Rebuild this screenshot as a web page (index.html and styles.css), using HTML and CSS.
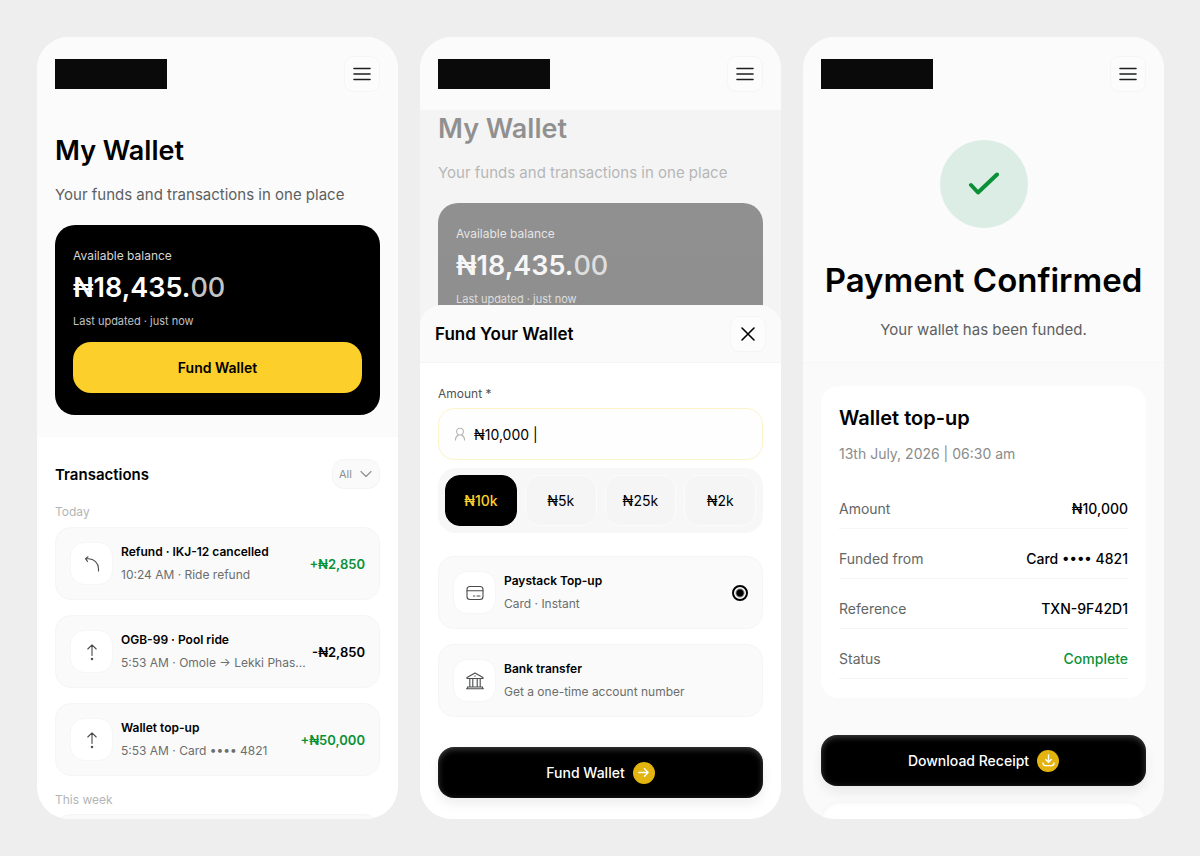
FILE: index.html
```html
<!DOCTYPE html>
<html lang="en">
<head>
  <meta charset="UTF-8">
  <meta name="viewport" content="width=device-width, initial-scale=1.0">
  <title>My Wallet</title>
  <link rel="stylesheet" href="styles.css">
</head>
<body>
  <!-- shared icons -->
  <svg class="sprite" aria-hidden="true">
    <symbol id="i-menu" viewBox="0 0 24 24"><path d="M4 6.5h16M4 12h16M4 17.5h16"/></symbol>
    <symbol id="i-up" viewBox="0 0 20 20"><path d="M10 13.500V3M5.8 7 10 2.8 14.2 7"/><circle cx="10" cy="17" r=".7"/></symbol>
    <symbol id="i-back" viewBox="0 0 20 20"><path d="M6 2.800 3.500 4.600l2 2.800M3.700 4.700h2.800a10 10 0 0 1 10 10v2.300"/></symbol>
  </svg>

  <main class="screens">
    <!-- Wallet -->
    <section class="screen">
      <header class="topbar">
        <div class="logo"></div>
        <button class="icon-btn" aria-label="Menu"><svg class="icon menu"><use href="#i-menu"/></svg></button>
      </header>

      <div class="hero">
        <h1>My Wallet</h1>
        <p class="lead">Your funds and transactions in one place</p>
        <div class="balance-card">
          <p class="balance-label">Available balance</p>
          <p class="balance">₦18,435.<span class="cents">00</span></p>
          <p class="updated">Last updated · just now</p>
          <button class="btn-yellow">Fund Wallet</button>
        </div>
      </div>

      <div class="transactions">
        <div class="list-head">
          <h2>Transactions</h2>
          <div class="filter">
            <select aria-label="Filter transactions">
              <option>All</option>
              <option>In</option>
              <option>Out</option>
            </select>
            <svg class="icon chevron" viewBox="0 0 12 12"><path d="M1 3.5l5 5 5-5"/></svg>
          </div>
        </div>

        <h3>Today</h3>
        <div class="stack">
          <article class="row">
            <span class="tile"><svg class="icon"><use href="#i-back"/></svg></span>
            <div class="row-text">
              <p class="row-title">Refund · IKJ-12 cancelled</p>
              <p class="row-sub">10:24 AM · Ride refund</p>
            </div>
            <span class="sum plus">+₦2,850</span>
          </article>
          <article class="row">
            <span class="tile"><svg class="icon"><use href="#i-up"/></svg></span>
            <div class="row-text">
              <p class="row-title">OGB-99 · Pool ride</p>
              <p class="row-sub">5:53 AM · Omole → Lekki Phas...</p>
            </div>
            <span class="sum">-₦2,850</span>
          </article>
          <article class="row">
            <span class="tile"><svg class="icon"><use href="#i-up"/></svg></span>
            <div class="row-text">
              <p class="row-title">Wallet top-up</p>
              <p class="row-sub">5:53 AM · Card •••• 4821</p>
            </div>
            <span class="sum plus">+₦50,000</span>
          </article>
        </div>

        <h3 class="next">This week</h3>
        <div class="stack">
          <article class="row"></article>
        </div>
      </div>
    </section>

    <!-- Fund wallet sheet -->
    <section class="screen">
      <header class="topbar">
        <div class="logo"></div>
        <button class="icon-btn" aria-label="Menu"><svg class="icon menu"><use href="#i-menu"/></svg></button>
      </header>

      <div class="behind">
        <div class="hero scrolled">
          <h1>My Wallet</h1>
          <p class="lead">Your funds and transactions in one place</p>
          <div class="balance-card">
            <p class="balance-label">Available balance</p>
            <p class="balance">₦18,435.<span class="cents">00</span></p>
            <p class="updated">Last updated · just now</p>
          </div>
        </div>
      </div>

      <form class="sheet">
        <div class="sheet-head">
          <h2>Fund Your Wallet</h2>
          <button type="button" class="icon-btn" aria-label="Close">
            <svg class="icon close" viewBox="0 0 16 16"><path d="M2 2l12 12M14 2 2 14"/></svg>
          </button>
        </div>
        <div class="sheet-body">
          <label for="amount">Amount *</label>
          <div class="field">
            <svg class="icon user" viewBox="0 0 14 14"><circle cx="7" cy="4.6" r="3.4"/><path d="M2.4 13c0-2.4 1.6-4.2 3-5M11.6 13c0-2.4-1.6-4.2-3-5"/></svg>
            <input type="text" id="amount" value="₦10,000 |">
          </div>
          <div class="presets">
            <button type="button" class="active">₦10k</button>
            <button type="button">₦5k</button>
            <button type="button">₦25k</button>
            <button type="button">₦2k</button>
          </div>

          <div class="stack">
            <label class="row">
              <span class="tile"><svg class="icon" viewBox="0 0 20 20"><rect x="2" y="3.5" width="16" height="13" rx="3"/><path d="M2 7.8h16M8.4 13h1.4M12 13h3"/></svg></span>
              <span class="row-text">
                <span class="row-title">Paystack Top-up</span>
                <span class="row-sub">Card · Instant</span>
              </span>
              <input type="radio" name="method" checked>
            </label>
            <label class="row">
              <span class="tile"><svg class="icon" viewBox="0 0 20 20"><path d="M2 7.500V6.500L10 2l8 4.500v1zM2.500 17.500v-1.500h15v1.500M4.800 7.500v8.500M7.800 7.500v8.500M12.200 7.500v8.500M15.200 7.500v8.500M1.500 17.800h17M9.700 5h.6"/></svg></span>
              <span class="row-text">
                <span class="row-title">Bank transfer</span>
                <span class="row-sub">Get a one-time account number</span>
              </span>
              <input type="radio" name="method">
            </label>
          </div>

          <button type="button" class="btn-dark">
            Fund Wallet
            <span class="badge"><svg class="icon" viewBox="0 0 14 14"><path d="M2 7h10M8 3l4 4-4 4"/></svg></span>
          </button>
        </div>
      </form>
    </section>

    <!-- Receipt -->
    <section class="screen receipt">
      <header class="topbar">
        <div class="logo"></div>
        <button class="icon-btn" aria-label="Menu"><svg class="icon menu"><use href="#i-menu"/></svg></button>
      </header>

      <div class="confirm">
        <div class="check"><svg class="icon" viewBox="0 0 32 24"><path d="M3 13 10 20.500 29 2.500"/></svg></div>
        <h1>Payment Confirmed</h1>
        <p class="lead">Your wallet has been funded.</p>
      </div>

      <div class="receipt-body">
        <div class="details">
          <h2>Wallet top-up</h2>
          <p class="date">13th July, 2026 | 06:30 am</p>
          <dl>
            <div><dt>Amount</dt><dd>₦10,000</dd></div>
            <div><dt>Funded from</dt><dd>Card •••• 4821</dd></div>
            <div><dt>Reference</dt><dd>TXN-9F42D1</dd></div>
            <div><dt>Status</dt><dd class="done">Complete</dd></div>
          </dl>
        </div>
        <button class="btn-dark">
          Download Receipt
          <span class="badge"><svg class="icon" viewBox="0 0 14 14"><path d="M7 1v7.500M4 6l3 3 3-3M1 9.500c0 2.500 1 3 2.500 3h7c1.500 0 2.500-.5 2.500-3"/></svg></span>
        </button>
        <div class="next-card"></div>
      </div>
    </section>
  </main>
</body>
</html>
```

FILE: styles.css
```css
* {
  box-sizing: border-box;
}

body {
  margin: 0;
  background: #eeeeee;
  color: #000;
  font-family: Inter, "Liberation Sans", sans-serif;
}

h1, h2, h3, p, dl, dd {
  margin: 0;
}

button, input, select {
  font-family: inherit;
  color: inherit;
}

button {
  padding: 0;
  border: none;
  cursor: pointer;
}

.sprite {
  display: none;
}

.icon {
  display: block;
  width: 20px;
  height: 20px;
  fill: none;
  stroke: currentColor;
  stroke-width: 1.1;
  stroke-linecap: round;
  stroke-linejoin: round;
}

/* three phone screens side by side */
.screens {
  display: grid;
  grid-template-columns: repeat(3, 1fr);
  gap: 22px;
  height: 100vh;
  padding: 37px 36px 37px 37px;
}

.screen {
  display: flex;
  flex-direction: column;
  min-width: 0;
  min-height: 0;
  overflow: hidden;
  border-radius: 32px;
  background: #fff;
}

.topbar {
  display: flex;
  flex-shrink: 0;
  align-items: center;
  justify-content: space-between;
  height: 73px;
  padding: 0 18px;
  background: #fbfbfb;
}

.logo {
  width: 112px;
  height: 30px;
  background: #0a0a0a;
}

.icon-btn {
  display: grid;
  place-items: center;
  width: 36px;
  height: 36px;
  border: 1px solid #f5f5f5;
  border-radius: 9px;
  background: #fcfcfc;
  color: #1c1f1e;
}

.icon.menu {
  width: 24px;
  height: 24px;
  stroke-width: 1.6;
}

.icon.close {
  width: 16px;
  height: 16px;
  color: #000;
  stroke-width: 1.6;
}

/* wallet */
.hero {
  padding: 23px 18px 22px;
  background: #fbfbfb;
}

.hero h1 {
  font-size: 27px;
  font-weight: 600;
  line-height: 36px;
}

.lead {
  color: #5c605f;
  font-size: 15px;
  line-height: 20px;
}

.hero .lead {
  margin: 16px 0 20px;
}

.balance-card {
  padding: 22px 18px;
  border-radius: 20px;
  background: #000;
  color: #fff;
}

.balance-label {
  color: #d6d6d6;
  font-size: 12px;
  line-height: 18px;
}

.balance {
  margin-top: 4px;
  font-size: 27px;
  font-weight: 600;
  line-height: 38px;
}

.cents {
  color: #c4c4c4;
  font-weight: 500;
}

.updated {
  margin: 6px 0 13px;
  color: #c0c0c0;
  font-size: 11px;
  line-height: 16px;
}

.btn-yellow {
  width: 100%;
  height: 51px;
  border-radius: 18px;
  background: #fdcf2a;
  color: #000;
  font-size: 14px;
  font-weight: 600;
}

.transactions {
  padding: 22px 18px;
}

.list-head {
  display: flex;
  align-items: center;
  justify-content: space-between;
}

.list-head h2 {
  font-size: 15px;
  font-weight: 600;
}

.filter {
  position: relative;
  color: #8c8f8e;
}

.filter select {
  width: 48px;
  height: 30px;
  padding: 0 8px 0 6px;
  border: 1px solid #f4f4f4;
  border-radius: 12px;
  background: #fafafa;
  font-size: 11px;
  appearance: none;
}

.filter .chevron {
  position: absolute;
  top: 9px;
  right: 8px;
  width: 12px;
  height: 12px;
  pointer-events: none;
}

h3 {
  margin: 14px 0 6px;
  color: #b3b6b5;
  font-size: 12px;
  font-weight: 400;
  line-height: 18px;
}

h3.next {
  margin: 15px 0 5px;
}

.stack {
  display: flex;
  flex-direction: column;
  gap: 15px;
}

.row {
  display: flex;
  align-items: center;
  gap: 8px;
  min-height: 73px;
  padding: 0 14px;
  border: 1px solid #f5f5f5;
  border-radius: 16px;
  background: #fafafa;
}

.tile {
  display: grid;
  flex-shrink: 0;
  place-items: center;
  width: 43px;
  height: 43px;
  border: 1px solid #f6f6f6;
  border-radius: 14px;
  background: #fff;
  color: #4a4d4c;
}

.row-text {
  display: flex;
  flex: 1;
  flex-direction: column;
  gap: 5px;
  min-width: 0;
  white-space: nowrap;
}

.row-title {
  color: #000;
  font-size: 12px;
  font-weight: 600;
  line-height: 18px;
}

.row-sub {
  color: #6b6e6d;
  font-size: 12px;
  line-height: 18px;
}

.sum {
  font-size: 13px;
  font-weight: 600;
}

.plus, .done {
  color: #0a9137;
}

/* page dimmed behind the sheet, runs on under its rounded corners */
.behind {
  flex-shrink: 0;
  height: 217px;
  overflow: hidden;
  background: #f0f0f0;
}

.behind .hero {
  opacity: 0.4;
}

.hero.scrolled {
  padding-top: 1px;
}

/* bottom sheet */
.sheet {
  z-index: 1;
  flex: 1;
  margin-top: -22px;
  border-radius: 22px 22px 0 0;
  background: #fff;
}

.sheet-head {
  display: flex;
  align-items: center;
  justify-content: space-between;
  height: 58px;
  padding: 0 15px;
  border-bottom: 1px solid #f5f5f5;
  border-radius: 22px 22px 0 0;
  background: #fafafa;
}

.sheet-head h2 {
  font-size: 17px;
  font-weight: 600;
}

.sheet-body {
  padding: 22px 18px;
}

.sheet-body > label {
  display: block;
  margin-bottom: 5px;
  color: #505352;
  font-size: 12px;
  line-height: 18px;
}

.field {
  display: flex;
  align-items: center;
  gap: 7px;
  height: 52px;
  padding: 0 14px;
  border: 1px solid #fdf3c8;
  border-radius: 16px;
  background: #fefefe;
}

.field .user {
  width: 14px;
  height: 14px;
  color: #b3b6b5;
}

.field input {
  flex: 1;
  min-width: 0;
  padding: 0;
  border: none;
  outline: none;
  background: none;
  font-size: 14px;
}

.presets {
  display: grid;
  grid-template-columns: repeat(4, 1fr);
  gap: 8px;
  margin: 8px 0 23px;
  padding: 7px;
  border-radius: 18px;
  background: #f7f7f7;
}

.presets button {
  height: 51px;
  border: 1px solid #fcfcfc;
  border-radius: 15px;
  background: #f5f5f5;
  font-size: 14px;
}

.presets .active {
  border-color: #000;
  background: #000;
  color: #fdcf2a;
  font-weight: 500;
}

.row input {
  width: 16px;
  height: 16px;
  margin: 0;
  border-radius: 50%;
  appearance: none;
}

.row input:checked {
  border: 2px solid #000;
  background: radial-gradient(circle, #000 3px, #fff 5px);
}

.btn-dark {
  display: flex;
  align-items: center;
  justify-content: center;
  gap: 8px;
  width: 100%;
  height: 51px;
  border-radius: 16px;
  background: #000;
  box-shadow: inset 0 2px 6px rgba(255, 255, 255, 0.25), 0 6px 12px rgba(0, 0, 0, 0.07);
  color: #fff;
  font-size: 14px;
  font-weight: 500;
}

.sheet .btn-dark {
  margin-top: 30px;
}

.badge {
  display: grid;
  place-items: center;
  width: 22px;
  height: 22px;
  border-radius: 50%;
  background: #e3b30f;
}

.badge .icon {
  width: 13px;
  height: 13px;
  stroke-width: 1.5;
}

/* receipt */
.receipt {
  background: #fafafa;
}

.confirm {
  padding: 30px 18px 22px;
  border-bottom: 1px solid #f6f6f6;
  background: #fbfbfb;
  text-align: center;
}

.check {
  display: grid;
  place-items: center;
  width: 88px;
  height: 88px;
  margin: 0 auto 30px;
  border-radius: 50%;
  background: #dcede5;
  color: #0a9137;
}

.check .icon {
  width: 32px;
  height: 24px;
  stroke-width: 4;
}

.confirm h1 {
  font-size: 33px;
  font-weight: 600;
  line-height: 44px;
  white-space: nowrap;
}

.confirm .lead {
  margin-top: 18px;
}

.receipt-body {
  padding: 23px 18px;
}

.details {
  padding: 18px;
  border-radius: 18px;
  background: #fff;
}

.details h2 {
  font-size: 20px;
  font-weight: 600;
  line-height: 28px;
}

.date {
  margin: 13px 0 17px;
  color: #8a8d8c;
  font-size: 14px;
  line-height: 18px;
}

.details dl > div {
  display: flex;
  align-items: flex-end;
  justify-content: space-between;
  height: 49px;
  margin-bottom: 1px;
  padding-bottom: 9px;
  border-bottom: 1px solid #f5f5f5;
  font-size: 14px;
  line-height: 20px;
}

.details dt {
  color: #636665;
}

.details dd {
  font-weight: 500;
}

.receipt .btn-dark {
  margin: 37px 0 15px;
}

.next-card {
  height: 80px;
  border-radius: 18px;
  background: #fff;
  box-shadow: inset 0 2px 4px rgba(0, 0, 0, 0.05);
}
```
